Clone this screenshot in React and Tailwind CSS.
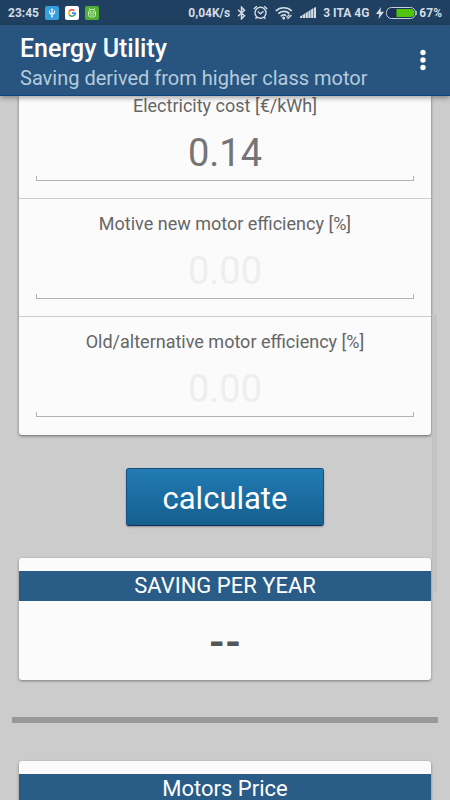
import { useState } from "react";

const fields = [
    { id: "cost", label: "Electricity cost [€/kWh]", value: "0.14" },
    { id: "newMotor", label: "Motive new motor efficiency [%]", value: "" },
    { id: "oldMotor", label: "Old/alternative motor efficiency [%]", value: "" },
];

const UsbIcon = () => (
    <svg className="size-[14px]" viewBox="0 0 14 14" fill="none">
        <rect width="14" height="14" rx="2" fill="#35a0dc" />
        <path d="M7 3v7M4.500 4.500V6c0 1.300.8 2 2.500 2s2.500-.7 2.500-2V4.500" stroke="#e8f6ff" strokeWidth="1.2" />
        <path d="M7 2l1.300 2H5.700z" fill="#e8f6ff" />
        <circle cx="7" cy="10.500" r="1" fill="#e8f6ff" />
    </svg>
);

const GoogleIcon = () => (
    <svg className="size-[14px]" viewBox="0 0 14 14" fill="none" strokeWidth="1.6">
        <rect width="14" height="14" rx="2" fill="#fff" />
        <path d="M9.300 4.700A3.200 3.200 0 0 0 4.200 5.400" stroke="#ea4335" />
        <path d="M4.200 5.400a3.200 3.200 0 0 0 0 3.200" stroke="#fbbc05" />
        <path d="M4.200 8.600a3.200 3.200 0 0 0 5 .7" stroke="#34a853" />
        <path d="M9.200 9.300a3.200 3.200 0 0 0 1-2.200H7" stroke="#4285f4" />
    </svg>
);

const DroidIcon = () => (
    <svg className="size-[14px]" viewBox="0 0 14 14" fill="none">
        <rect width="14" height="14" rx="2" fill="#4fae33" />
        <path
            d="M3.500 6.800a3.500 3.500 0 0 1 7 0v2.200a2 2 0 0 1-2 2h-3a2 2 0 0 1-2-2zM3.500 7h7M4.300 2.200l1 1.600M9.700 2.200l-1 1.600"
            stroke="#d4f3c4"
            strokeWidth="0.9"
        />
        <circle cx="5.700" cy="5.400" r="0.600" fill="#d4f3c4" />
        <circle cx="8.300" cy="5.400" r="0.600" fill="#d4f3c4" />
        <path d="M5 8.600l1 .9 1-.9 1 .9 1-.9" stroke="#d4f3c4" strokeWidth="0.8" />
    </svg>
);

const BluetoothIcon = () => (
    <svg className="h-[14px] w-[9px]" viewBox="0 0 9 14" fill="none" stroke="currentColor" strokeWidth="1.5">
        <path d="M1 3.800l6.500 6L4.500 12.800V1.200L7.500 4.200 1 10.200" />
    </svg>
);

const AlarmIcon = () => (
    <svg className="size-[15px]" viewBox="0 0 15 15" fill="none" stroke="currentColor" strokeWidth="1.4">
        <circle cx="7.500" cy="7.800" r="5.500" />
        <path d="M4.800 6.500l2.700 2.300 3-2.500M.8 4L3.800 1.200M14.200 4l-3-2.800M3.800 12.300l-1.300 1.500M11.200 12.300l1.300 1.500" />
    </svg>
);

const WifiIcon = () => (
    <svg className="h-[14px] w-[18px]" viewBox="0 0 18 14" fill="none" stroke="currentColor" strokeWidth="1.7">
        <path d="M.8 5a11.500 11.500 0 0 1 16 0M3.300 7.700a8 8 0 0 1 11-.2M5.800 10.300a4.500 4.500 0 0 1 5.400-.9" />
        <circle cx="8.700" cy="12" r="1.500" fill="currentColor" stroke="none" />
        <path d="M11.500 11.500l3-3M12.500 13l4-4" strokeWidth="1.2" />
    </svg>
);

const SignalIcon = () => (
    <svg className="h-[11px] w-[16px]" viewBox="0 0 16 11" fill="currentColor">
        <path d="M0 11V9.500L2.500 8v3zM3 11V7.700L5.200 6.200V11zM5.700 11V6L7.900 4.600V11zM8.400 11V4.300l2.200-1.400V11zM11.100 11V2.600l2-1.300V11zM13.700 11V1L16 0v11z" />
    </svg>
);

const BatteryIcon = () => (
    <svg className="h-[12px] w-[31px]" viewBox="0 0 31 12" fill="none">
        <rect x="0.5" y="0.5" width="29" height="11" rx="5" fill="#1b3058" stroke="#c3d0dc" />
        <path d="M10.500 2H24.500a4 4 0 0 1 0 8H10.500z" fill="#4fc50b" />
        <path d="M30.300 4v4" stroke="#c3d0dc" />
    </svg>
);

const StatusBar = () => (
    <div className="flex h-[25px] items-center justify-between bg-[#1f4060] px-2 text-[12px] font-bold text-[#d3dce4]">
        <div className="flex items-center gap-[6px]">
            <span>23:45</span>
            <UsbIcon />
            <GoogleIcon />
            <DroidIcon />
        </div>
        <div className="flex items-center gap-[7px]">
            <span>0,04K/s</span>
            <BluetoothIcon />
            <AlarmIcon />
            <WifiIcon />
            <SignalIcon />
            <span>3 ITA 4G</span>
            <div className="flex items-center gap-[2px]">
                <svg className="h-[12px] w-[8px]" viewBox="0 0 8 12" fill="currentColor">
                    <path d="M5 0L0 7h3.300L2.500 12 8 4.800H4.500z" />
                </svg>
                <BatteryIcon />
                <span>67%</span>
            </div>
        </div>
    </div>
);

const Header = () => (
    <header className="relative z-10 flex h-[71px] items-center justify-between border-b border-[#0c4580] bg-[#28557f] pr-4 pl-5 shadow-[0_2px_5px_rgba(0,0,0,0.35)]">
        <div className="pt-[6px]">
            <h1 className="text-[25px] leading-[30px] font-medium text-white">Energy Utility</h1>
            <p className="text-[20px] leading-7 text-[#b4cbdd]">Saving derived from higher class motor</p>
        </div>
        <button type="button" aria-label="More options" className="px-2 py-3">
            <svg className="h-[22px] w-[6px]" viewBox="0 0 6 22" fill="#fff">
                <circle cx="3" cy="3.5" r="2.7" />
                <circle cx="3" cy="11" r="2.7" />
                <circle cx="3" cy="18.5" r="2.7" />
            </svg>
        </button>
    </header>
);

const ResultCard = ({ title, children }) => (
    <section className="rounded-[3px] bg-[#fbfbfb] pt-[13px] shadow-[0_1px_3px_rgba(0,0,0,0.4)]">
        <h2 className="bg-[#295c87] py-1 text-center text-[22px] leading-[22px] text-white">{title}</h2>
        <div className="flex h-[79px] items-center justify-center pt-1 text-[41px] leading-none font-bold text-[#555]">
            {children}
        </div>
    </section>
);

const App = () => {
    const [values, setValues] = useState(Object.fromEntries(fields.map((f) => [f.id, f.value])));

    return (
        <div className="flex h-screen flex-col overflow-hidden bg-[#ccc] font-['Roboto',sans-serif]">
            <StatusBar />
            <Header />

            <main className="relative flex-1 overflow-hidden px-[19px]">
                {/* Input card */}
                <form className="rounded-b-[3px] bg-[#fbfbfb] shadow-[0_1px_3px_rgba(0,0,0,0.5)]">
                    {fields.map((field) => (
                        <div
                            key={field.id}
                            className="border-b border-[#ccc] px-[17px] pt-[15px] pb-[17px] first:pt-0 last:border-b-0 last:pb-[18px]"
                        >
                            <label htmlFor={field.id} className="block text-center text-[18px] leading-5 text-[#666]">
                                {field.label}
                            </label>
                            <input
                                id={field.id}
                                inputMode="decimal"
                                placeholder="0.00"
                                value={values[field.id]}
                                onChange={(e) => setValues({ ...values, [field.id]: e.target.value })}
                                className="mt-[14px] block h-[46px] w-full text-center text-[38px] text-[#757575] outline-none placeholder:text-[#eee]"
                            />
                            <div className="h-[5px] border-x border-b border-[#b3b3b3]"></div>
                        </div>
                    ))}
                </form>

                <div className="flex justify-center pt-[33px] pb-8">
                    <button
                        type="button"
                        className="h-[58px] w-[198px] rounded-[3px] border border-[#17507f] border-b-[#0c3060] bg-linear-to-b from-[#227bb4] to-[#155f8f] pt-[2px] text-[31px] leading-none text-white shadow-[0_1px_2px_rgba(0,0,0,0.3)]"
                    >
                        calculate
                    </button>
                </div>

                <ResultCard title="SAVING PER YEAR">--</ResultCard>

                <hr className="-mx-[7px] mt-[37px] mb-[38px] h-[6px] border-0 bg-[#999]" />

                <ResultCard title="Motors Price" />

                {/* Scroll thumb */}
                <div className="absolute top-[219px] right-[13px] h-[277px] w-[5px] bg-[#c3c3c3]"></div>
            </main>
        </div>
    );
};

export default App;
